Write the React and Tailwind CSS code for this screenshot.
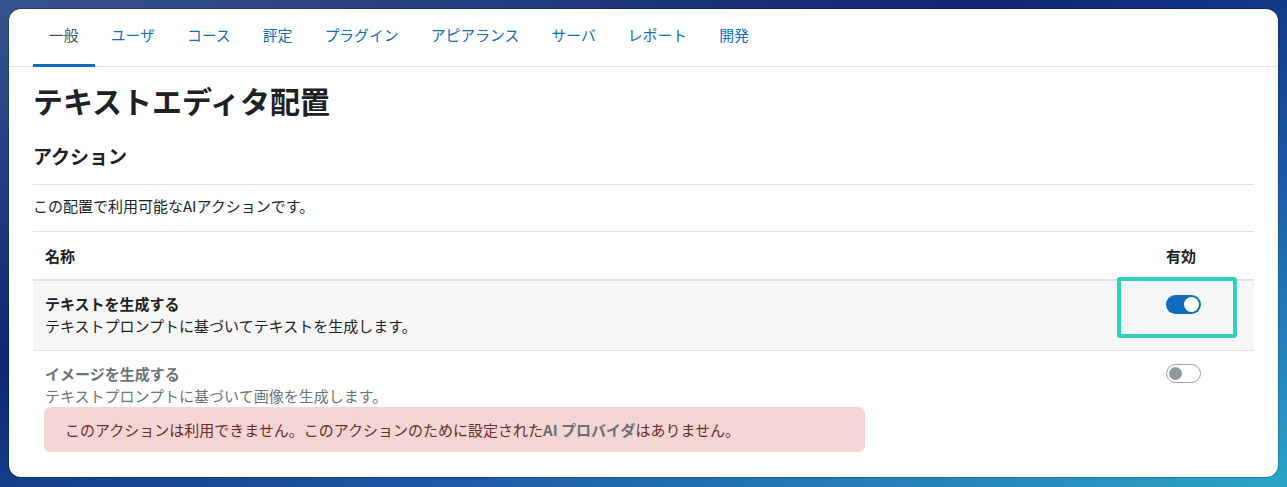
const TABS = ['一般', 'ユーザ', 'コース', '評定', 'プラグイン', 'アピアランス', 'サーバ', 'レポート', '開発'];

function Toggle({ on }) {
  if (on) {
    return (
      <span className="relative inline-flex h-[19px] w-[35px] items-center rounded-full bg-[#0f6cbf]">
        <span className="absolute right-[2px] h-[15px] w-[15px] rounded-full bg-white" />
      </span>
    );
  }
  return (
    <span className="relative inline-flex h-[19px] w-[35px] items-center rounded-full border border-[#9aa0a6] bg-white">
      <span className="absolute left-[2px] h-[13px] w-[13px] rounded-full bg-[#93979c]" />
    </span>
  );
}

export default function App() {
  return (
    <div
      className="h-[487px] w-full overflow-hidden bg-[linear-gradient(160deg,#36548f_0%,#0e2672_38%,#1d5aa8_68%,#2ba4c8_100%)] p-[9px]"
      style={{ fontFamily: '"Noto Sans CJK JP", "Noto Sans", sans-serif' }}
    >
      <div className="flex h-[468px] w-[1269px] flex-col overflow-hidden rounded-[12px] bg-white shadow-[0_0_0_1px_rgba(0,0,0,0.18)]">
        {/* tabs */}
        <nav className="flex border-b border-[#dee2e6] px-6">
          {TABS.map((t, i) => (
            <div
              key={t}
              className={
                i === 0
                  ? '-mb-px border-b-[3px] border-[#0f6cbf] px-4 pt-[15px] pb-[18px] text-[14.85px] leading-[22px] text-[#495057]'
                  : 'px-4 pt-[15px] pb-[18px] text-[14.85px] leading-[22px] text-[#0f6cbf]'
              }
            >
              {t}
            </div>
          ))}
        </nav>

        <div className="flex flex-col px-6">
          <h1 className="mt-[15px] text-[30px] leading-[36px] font-semibold text-[#1d2125]">テキストエディタ配置</h1>
          <h2 className="mt-[26px] text-[19px] leading-[23px] font-semibold text-[#1d2125]">アクション</h2>
          <div className="mt-[17px] border-t border-[#dee2e6] pt-[10px] pb-[14px] text-[15px] leading-[22px] text-[#1d2125]">
            この配置で利用可能なAIアクションです。
          </div>

          {/* table */}
          <div className="border-t border-[#dee2e6]">
            <div className="flex border-b-2 border-[#dee2e6] text-[15px] leading-[22px] font-semibold text-[#1d2125]">
              <div className="flex-1 px-3 pt-[13px] pb-[12px]">名称</div>
              <div className="w-[100px] px-3 pt-[13px] pb-[12px]">有効</div>
            </div>

            <div className="flex border-b border-[#dee2e6] bg-[#f6f6f6] text-[15px] leading-[22px]">
              <div className="flex-1 px-3 pt-[12px] pb-[13px]">
                <div className="font-semibold text-[#1d2125]">テキストを生成する</div>
                <div className="text-[#1d2125]">テキストプロンプトに基づいてテキストを生成します。</div>
              </div>
              <div className="relative w-[100px] px-3 pt-[14px]">
                <Toggle on />
                <span className="absolute top-[-4px] left-[-37px] h-[61px] w-[120px] rounded-[3px] border-4 border-[#31cfc3]" />
              </div>
            </div>

            <div className="flex text-[15px] leading-[22px]">
              <div className="flex-1 px-3 pt-[12px]">
                <div className="font-semibold text-[#6c737a]">イメージを生成する</div>
                <div className="text-[#6c737a]">テキストプロンプトに基づいて画像を生成します。</div>
                <div className="-ml-px w-[821px] rounded-[6px] bg-[#f3d6d3] px-[21px] pt-[12px] pb-[11px] text-[#6e2b2b]">
                  このアクションは利用できません。このアクションのために設定された
                  <span className="font-semibold text-[#6b7077]">AI プロバイダ</span>
                  はありません。
                </div>
              </div>
              <div className="w-[100px] px-3 pt-[13px]">
                <Toggle on={false} />
              </div>
            </div>
          </div>
        </div>
      </div>
    </div>
  );
}
